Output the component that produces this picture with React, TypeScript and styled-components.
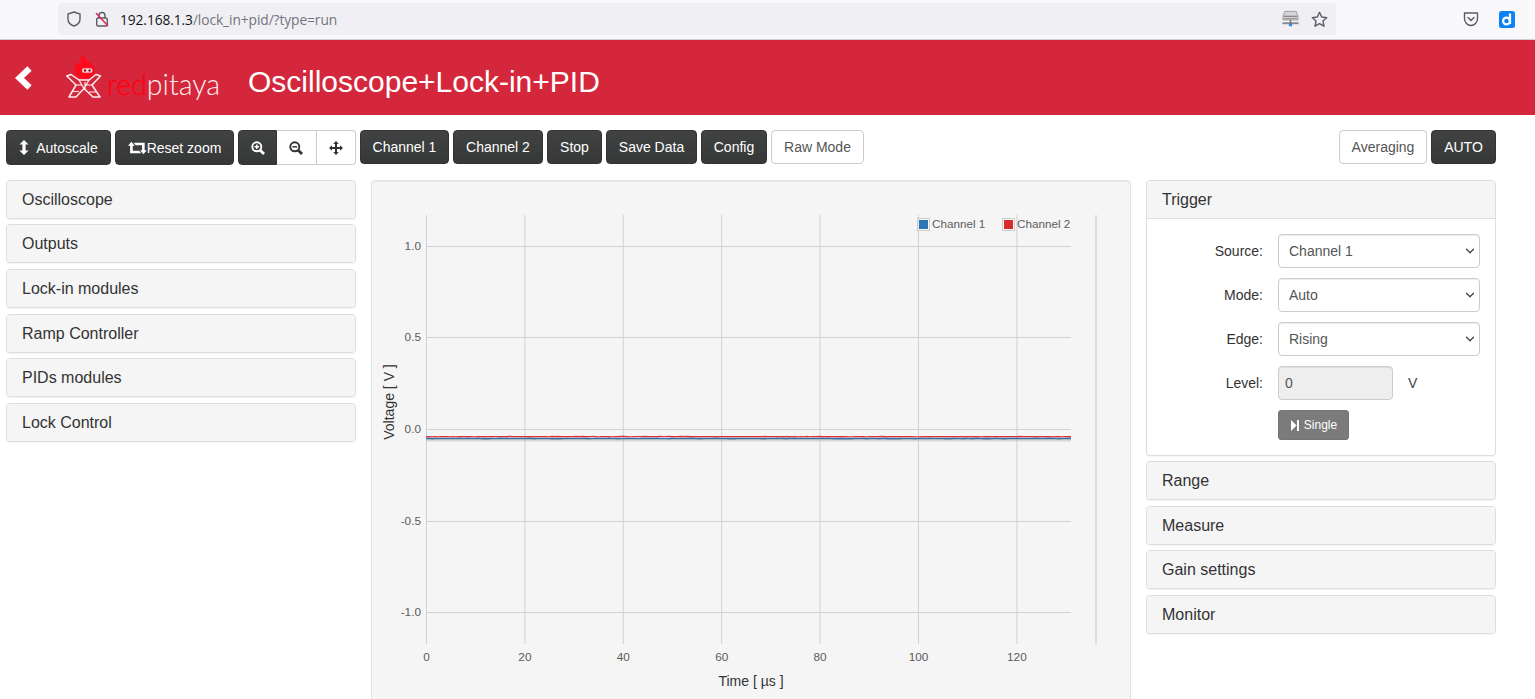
import React from 'react';
import styled, { createGlobalStyle } from 'styled-components';
import { ChevronDown } from 'lucide-react';

const Global = createGlobalStyle`
  html, body { margin: 0; padding: 0; height: 699px; overflow: hidden; background: #fff; }
  #root { height: 699px; overflow: hidden; }
  * { box-sizing: border-box; }
  body { font-family: "Liberation Sans", Arial, sans-serif; font-size: 14px; color: #333; }
`;

const BrowserBar = styled.div`
  height: 40px; background: #f9f9fb; border-bottom: 1px solid #cfcfd3;
  display: flex; align-items: center; padding: 0 20px 1px 58px;
`;
const UrlBox = styled.div`
  width: 1278px; height: 32px; background: #f0f0f4; border-radius: 4px;
  display: flex; align-items: center; padding: 0 8px 0 8px; gap: 6px;
`;
const UrlText = styled.div`
  font-family: "Open Sans", sans-serif; font-size: 13.8px; color: #15141a; margin-left: 4px; letter-spacing: -0.1px; flex: 1;
  span { color: #74747c; }
`;
const AddonIcons = styled.div`
  display: flex; align-items: center; margin-left: auto; gap: 20px;
`;
const Header = styled.header`
  height: 75px; background: #d5273b; display: flex; align-items: center; padding-left: 13px;
`;
const LogoBox = styled.div`
  display: flex; align-items: flex-start; margin-left: 33px; width: 182px; height: 46px; margin-top: -2px;
`;
const LogoWord = styled.div`
  font-family: "Lato", "Liberation Sans", sans-serif; font-weight: 300; font-size: 28.5px; line-height: 30px;
  color: #fdeef0; letter-spacing: 0; margin-left: 5px; margin-top: 15px; white-space: nowrap;
  span { color: #ff0014; -webkit-text-stroke: 0.35px #ff0014; }
`;
const Title = styled.h1`
  font-weight: 400; font-size: 30px; line-height: 34px; color: #fff; margin: 8px 0 0 0; letter-spacing: 0;
`;
const Toolbar = styled.div`
  display: flex; align-items: flex-start; padding: 15px 39px 0 6px; gap: 4px; height: 65px;
`;
const Btn = styled.button<{ $w: number; $light?: boolean }>`
  width: ${p => p.$w}px; height: 34px; border-radius: 4px; padding: 0; font: 14px "Liberation Sans", sans-serif;
  display: inline-flex; align-items: center; justify-content: center; gap: 4px; white-space: nowrap;
  border: 1px solid ${p => (p.$light ? '#ccc' : '#333')};
  background: ${p => (p.$light ? '#fff' : 'linear-gradient(#414343, #363838)')};
  color: ${p => (p.$light ? '#555' : '#fff')};
`;
const TallBtn = styled(Btn)<{ $gap?: number }>`height: 35px; gap: ${p => p.$gap ?? 4}px;`;
const Group = styled.div`display: flex;`;
const GroupBtn = styled.button<{ $dark?: boolean; $pos: 'l' | 'm' | 'r' }>`
  width: 39.33px; height: 35px; padding: 0; display: flex; align-items: center; justify-content: center;
  border: 1px solid ${p => (p.$dark ? '#333' : '#ccc')};
  border-left-width: ${p => (p.$pos === 'l' ? 1 : 0)}px;
  background: ${p => (p.$dark ? 'linear-gradient(#414343, #363838)' : '#fff')};
  border-radius: ${p => (p.$pos === 'l' ? '4px 0 0 4px' : p.$pos === 'r' ? '0 4px 4px 0' : '0')};
  color: ${p => (p.$dark ? '#fff' : '#333')};
`;
const Spacer = styled.div`flex: 1;`;
const Columns = styled.main`
  display: grid; grid-template-columns: 350px 760px 350px; gap: 15px; padding-left: 6px; align-items: start;
`;
const Column = styled.div<{ $nudge?: number }>`
  display: flex; flex-direction: column; gap: 5.6px; margin-top: ${p => p.$nudge ?? 0}px;
`;
const Panel = styled.section`
  border: 1px solid #ddd; border-radius: 4px; background: #fff; box-shadow: 0 1px 1px rgba(0,0,0,.05);
`;
const PanelHead = styled.div<{ $open?: boolean }>`
  height: 37px; background: #f5f5f5; border-radius: 3px; padding: 0 15px; font-size: 16px; line-height: 37px; color: #333;
  ${p => p.$open && 'border-bottom: 1px solid #ddd; border-radius: 3px 3px 0 0; height: 38px;'}
`;
const PanelBody = styled.div`
  padding: 15px 15px 14.7px 0; display: flex; flex-direction: column; gap: 10px;
`;
const FormRow = styled.div`display: flex; align-items: center; height: 34px;`;
const Label = styled.label`
  width: 116px; text-align: right; margin-right: 15px; font-size: 14px; color: #333;
`;
const SelectWrap = styled.div`position: relative; width: 202px; height: 34px;`;
const Select = styled.select`
  appearance: none; width: 100%; height: 100%; border: 1px solid #ccc; border-radius: 4px; background: #fff;
  padding: 0 10px; font: 14px "Liberation Sans", sans-serif; color: #555; box-shadow: inset 0 1px 1px rgba(0,0,0,.075);
`;
const Chevron = styled(ChevronDown)`
  position: absolute; right: 3px; top: 10px; width: 14px; height: 14px; color: #444; pointer-events: none;
`;
const LevelInput = styled.input`
  width: 115px; height: 34px; border: 1px solid #ccc; border-radius: 4px; background: #eee; padding: 0 6px;
  font: 14px "Liberation Sans", sans-serif; color: #555; box-shadow: inset 0 1px 1px rgba(0,0,0,.075);
`;
const Unit = styled.span`margin-left: 15px; color: #444;`;
const SingleRow = styled.div`padding-left: 131px; display: flex;`;
const SingleBtn = styled.button`
  width: 71px; height: 30px; background: #7b7b7b; border: 1px solid #757575; border-radius: 3px; color: #fff;
  font: 12px "Liberation Sans", sans-serif; padding: 0 0 0 1px; display: flex; align-items: center; justify-content: center; gap: 5px;
`;
const PlotPanel = styled.div`
  height: 540px; background: #f5f5f5; border: 1px solid #e3e3e3; border-radius: 4px;
  box-shadow: inset 0 1px 1px rgba(0,0,0,.05);
`;
const Chart = styled.svg`
  display: block; width: 758px; height: 538px;
  text { font-family: "Liberation Sans", sans-serif; }
`;
const Ico = styled.svg`display: block; flex: none;`;
const LockIco = styled(Ico)`margin-left: 6px;`;
const StarIco = styled(Ico)`margin-left: 6px;`;
const RetweetIco = styled(Ico)`margin-right: -4px;`;

const Shield = () => (
  <Ico width="16" height="16" viewBox="0 0 16 16" fill="none" stroke="#5b5b66" strokeWidth="1.4">
    <path d="M8 1 L14 3 V8 C14 11.5 11 14 8 15 C5 14 2 11.5 2 8 V3 Z" />
  </Ico>
);
const BrokenLock = () => (
  <LockIco width="16" height="16" viewBox="0 0 16 16" fill="none">
    <path d="M5 7 V4.5 a3 3 0 0 1 6 0 V7" stroke="#5b5b66" strokeWidth="1.4" />
    <rect x="2.7" y="7" width="10.6" height="8" rx="1.5" stroke="#5b5b66" strokeWidth="1.4" />
    <path d="M2 2 L14 15" stroke="#e22850" strokeWidth="1.5" />
  </LockIco>
);
const DriveIcon = () => (
  <Ico width="17" height="18" viewBox="0 0 18 18">
    <path d="M3 1 H15 L17 6 V10 H1 V6 Z" fill="#d6d6d6" stroke="#8a8a8a" strokeWidth=".8" />
    <rect x="2" y="5.5" width="14" height="1.4" fill="#888" />
    <rect x="2" y="8" width="14" height="1.2" fill="#999" />
    <rect x="0.5" y="12.5" width="17" height="2" fill="#8a8a8a" />
    <rect x="8.2" y="10" width="1.6" height="4" fill="#777" />
    <rect x="7.3" y="13.5" width="3.4" height="3.2" fill="#3c82e6" />
  </Ico>
);
const Star = () => (
  <StarIco width="17" height="17" viewBox="0 0 17 17" fill="none" stroke="#5b5b66" strokeWidth="1.4" strokeLinejoin="round">
    <path d="M8.5 1.3 L10.7 6 L15.8 6.6 L12 10.1 L13 15.2 L8.5 12.7 L4 15.2 L5 10.1 L1.2 6.6 L6.3 6 Z" />
  </StarIco>
);
const Pocket = () => (
  <Ico width="16" height="16" viewBox="0 0 16 16" fill="none" stroke="#5b5b66" strokeWidth="1.4">
    <path d="M1.5 2 H14.5 V7.5 C14.5 11.5 11.5 14.5 8 14.5 C4.5 14.5 1.5 11.5 1.5 7.5 Z" strokeLinejoin="round" />
    <path d="M5 6.5 L8 9.5 L11 6.5" strokeLinecap="round" />
  </Ico>
);
const DLogo = () => (
  <Ico width="16" height="17" viewBox="0 0 16 17">
    <rect width="16" height="17" rx="2.5" fill="#0a84f4" />
    <circle cx="7.5" cy="10" r="3.4" fill="none" stroke="#fff" strokeWidth="2.2" />
    <path d="M11 2.5 V13" stroke="#fff" strokeWidth="2.2" />
  </Ico>
);
const BackArrow = () => (
  <Ico width="20" height="26" viewBox="0 0 20 26" fill="none" stroke="#fff" strokeWidth="6.2">
    <path d="M16.5 3.5 L6.5 13 L16.5 22.5" />
  </Ico>
);
const LogoFigure = () => (
  <Ico width="36" height="44" viewBox="0 0 36 44" fill="none">
    <path d="M17 0.5 C17.5 3.5 21.5 5 21.5 8.5 C23.5 7 25 8 25 10 C28 12 29 15 28.5 18 C28 22.5 24 25 19 25 C12.5 25 8.5 21 8.5 16 C8.5 12.5 10 10.5 11.5 7.5 C12.5 10 13.5 10.5 14.5 10 C14 6.5 15 3 17 0.5 Z" fill="#ff0a1c" />
    <rect x="16" y="14.2" width="10.5" height="4.6" rx="2" fill="#f6d6da" />
    <circle cx="19" cy="16.5" r="1.2" fill="#8c1520" /><circle cx="23.6" cy="16.5" r="1.2" fill="#8c1520" />
    <path d="M0.8 22 L5 20.5 L13 26 L23 26 L30 20.5 L34.5 22 L26 31 L34 43 L27 43 L18 34.5 L10 43 L3 43 L10 31 Z" stroke="#fdeef0" strokeWidth="1.5" strokeLinejoin="round" />
    <path d="M13 26 L18 34.5 L23 26 M10 31 L16 31 M19 28 L19 36 M19 31 L26 31 M6.5 37.5 L13 37.5 M23 38 L30 38" stroke="#fdeef0" strokeWidth="1.2" />
  </Ico>
);
const Resize = () => (
  <Ico width="10" height="15" viewBox="0 0 10 15" fill="#fff">
    <path d="M5 0 L9.5 4.5 H6.6 V10.5 H9.5 L5 15 L.5 10.5 H3.4 V4.5 H.5 Z" />
  </Ico>
);
const Retweet = () => (
  <RetweetIco width="19" height="14" viewBox="0 0 18 13" fill="#fff">
    <path d="M0 4.3 L3.2 .5 L6.4 4.3 H4.5 V9 H10.5 L12.5 11.5 H2 V4.3 Z" />
    <path d="M17.8 8.7 L14.6 12.5 L11.4 8.7 H13.3 V4 H7.3 L5.3 1.5 H15.8 V8.7 Z" />
  </RetweetIco>
);
const Zoom = ({ color, plus }: { color: string; plus?: boolean }) => (
  <Ico width="14" height="14" viewBox="0 0 14 14" fill="none" stroke={color}>
    <circle cx="5.8" cy="5.8" r="4.5" strokeWidth="1.9" />
    <path d="M9.2 9.2 L13 13" strokeWidth="2.8" />
    <path d={plus ? 'M3.5 5.8 H8.1 M5.8 3.5 V8.1' : 'M3.5 5.8 H8.1'} strokeWidth="1.5" />
  </Ico>
);
const Move = () => (
  <Ico width="14" height="14" viewBox="0 0 14 14" fill="#333">
    <path d="M7 0 L9.8 3 H8 V6 H11 V4.2 L14 7 L11 9.8 V8 H8 V11 H9.8 L7 14 L4.2 11 H6 V8 H3 V9.8 L0 7 L3 4.2 V6 H6 V3 H4.2 Z" />
  </Ico>
);
const StepForward = () => (
  <Ico width="8" height="11" viewBox="0 0 8 11" fill="#fff">
    <path d="M0 0 L5.6 5.5 L0 11 Z M6 0 H8 V11 H6 Z" />
  </Ico>
);

/* chart coordinates below are relative to the plot panel's inner corner (372,181) */
const OX = 372;
const OY = 181;
const xTicks = [0, 20, 40, 60, 80, 100, 120];
const xPos = (v: number) => 426.5 + v * 4.92 - OX;
const yTicks: [string, number][] = [['1.0', 246.5], ['0.5', 337.5], ['0.0', 429.5], ['-0.5', 521.5], ['-1.0', 612.5]];

const noisy = (base: number, amp: number, seed: number) => {
  let d = '';
  for (let x = 426; x <= 1071; x += 3) {
    const n = Math.sin(x * 12.9898 + seed) * 43758.5453;
    const y = base + (n - Math.floor(n) - 0.5) * amp;
    d += `${d ? 'L' : 'M'}${x - OX} ${(y - OY).toFixed(2)} `;
  }
  return d;
};

const PlotChart = () => (
  <Chart viewBox="0 0 758 538">
    {xTicks.map(v => (
      <g key={v}>
        <line x1={xPos(v)} x2={xPos(v)} y1={215 - OY} y2={644 - OY} stroke="#d2d2d2" />
        <text x={xPos(v)} y={661 - OY} textAnchor="middle" fontSize="11.8" fill="#5c5c5c">{v}</text>
      </g>
    ))}
    {yTicks.map(([t, y]) => (
      <g key={t}>
        <line x1={426 - OX} x2={1071 - OX} y1={y - OY} y2={y - OY} stroke="#d2d2d2" />
        <text x={421 - OX} y={y - OY + 3} textAnchor="end" fontSize="11.8" fill="#5c5c5c">{t}</text>
      </g>
    ))}
    <line x1={1096 - OX} x2={1096 - OX} y1={215 - OY} y2={645 - OY} stroke="#dedede" strokeWidth="2" />
    <rect x={426 - OX} y={438.5 - OY} width={645} height={3} fill="#b9bec4" opacity=".55" />
    <path d={noisy(438.5, 0.25, 2)} fill="none" stroke="#3a6f9e" strokeWidth="1.6" />
    <path d={noisy(436.6, 0.3, 5)} fill="none" stroke="#dc2f38" strokeWidth="1.2" />
    <rect x={917.5 - OX} y={218.5 - OY} width="12" height="12" fill="#fff" fillOpacity=".4" stroke="#ccc" />
    <rect x={919 - OX} y={220 - OY} width="9" height="9" fill="#2e75b6" />
    <text x={932 - OX} y={228 - OY} fontSize="11.7" fill="#5c5c5c">Channel 1</text>
    <rect x={1002.5 - OX} y={218.5 - OY} width="12" height="12" fill="#fff" fillOpacity=".4" stroke="#ccc" />
    <rect x={1004 - OX} y={220 - OY} width="9" height="9" fill="#d62c2c" />
    <text x={1017 - OX} y={228 - OY} fontSize="11.7" fill="#5c5c5c">Channel 2</text>
    <text x={751 - OX} y={686 - OY} textAnchor="middle" fontSize="14" fill="#333">Time [ µs ]</text>
    <text transform={`translate(${394 - OX} ${402 - OY}) rotate(-90)`} textAnchor="middle" fontSize="14" fill="#333">Voltage [ V ]</text>
  </Chart>
);

const leftPanels = ['Oscilloscope', 'Outputs', 'Lock-in modules', 'Ramp Controller', 'PIDs modules', 'Lock Control'];
const rightPanels = ['Range', 'Measure', 'Gain settings', 'Monitor'];

const SelectField = ({ label, value }: { label: string; value: string }) => (
  <FormRow>
    <Label>{label}</Label>
    <SelectWrap>
      <Select defaultValue={value}><option>{value}</option></Select>
      <Chevron strokeWidth={2.2} />
    </SelectWrap>
  </FormRow>
);

export default function App() {
  return (
    <>
      <Global />
      <BrowserBar>
        <UrlBox>
          <Shield />
          <BrokenLock />
          <UrlText>192.168.1.3<span>/lock_in+pid/?type=run</span></UrlText>
          <DriveIcon />
          <Star />
        </UrlBox>
        <AddonIcons><Pocket /><DLogo /></AddonIcons>
      </BrowserBar>
      <Header>
        <BackArrow />
        <LogoBox>
          <LogoFigure />
          <LogoWord><span>red</span>pitaya</LogoWord>
        </LogoBox>
        <Title>Oscilloscope+Lock-in+PID</Title>
      </Header>
      <Toolbar>
        <TallBtn $w={105} $gap={7}><Resize />Autoscale</TallBtn>
        <TallBtn $w={119}><Retweet />Reset zoom</TallBtn>
        <Group>
          <GroupBtn $dark $pos="l"><Zoom color="#fff" plus /></GroupBtn>
          <GroupBtn $pos="m"><Zoom color="#333" /></GroupBtn>
          <GroupBtn $pos="r"><Move /></GroupBtn>
        </Group>
        <Btn $w={89}>Channel 1</Btn>
        <Btn $w={90}>Channel 2</Btn>
        <Btn $w={55}>Stop</Btn>
        <Btn $w={91}>Save Data</Btn>
        <Btn $w={66}>Config</Btn>
        <Btn $w={93} $light>Raw Mode</Btn>
        <Spacer />
        <Btn $w={88} $light>Averaging</Btn>
        <Btn $w={65}>AUTO</Btn>
      </Toolbar>
      <Columns>
        <Column $nudge={-0.2}>
          {leftPanels.map(t => <Panel key={t}><PanelHead>{t}</PanelHead></Panel>)}
        </Column>
        <PlotPanel><PlotChart /></PlotPanel>
        <Column>
          <Panel>
            <PanelHead $open>Trigger</PanelHead>
            <PanelBody>
              <SelectField label="Source:" value="Channel 1" />
              <SelectField label="Mode:" value="Auto" />
              <SelectField label="Edge:" value="Rising" />
              <FormRow>
                <Label>Level:</Label>
                <LevelInput defaultValue="0" disabled />
                <Unit>V</Unit>
              </FormRow>
              <SingleRow><SingleBtn><StepForward />Single</SingleBtn></SingleRow>
            </PanelBody>
          </Panel>
          {rightPanels.map(t => <Panel key={t}><PanelHead>{t}</PanelHead></Panel>)}
        </Column>
      </Columns>
    </>
  );
}
